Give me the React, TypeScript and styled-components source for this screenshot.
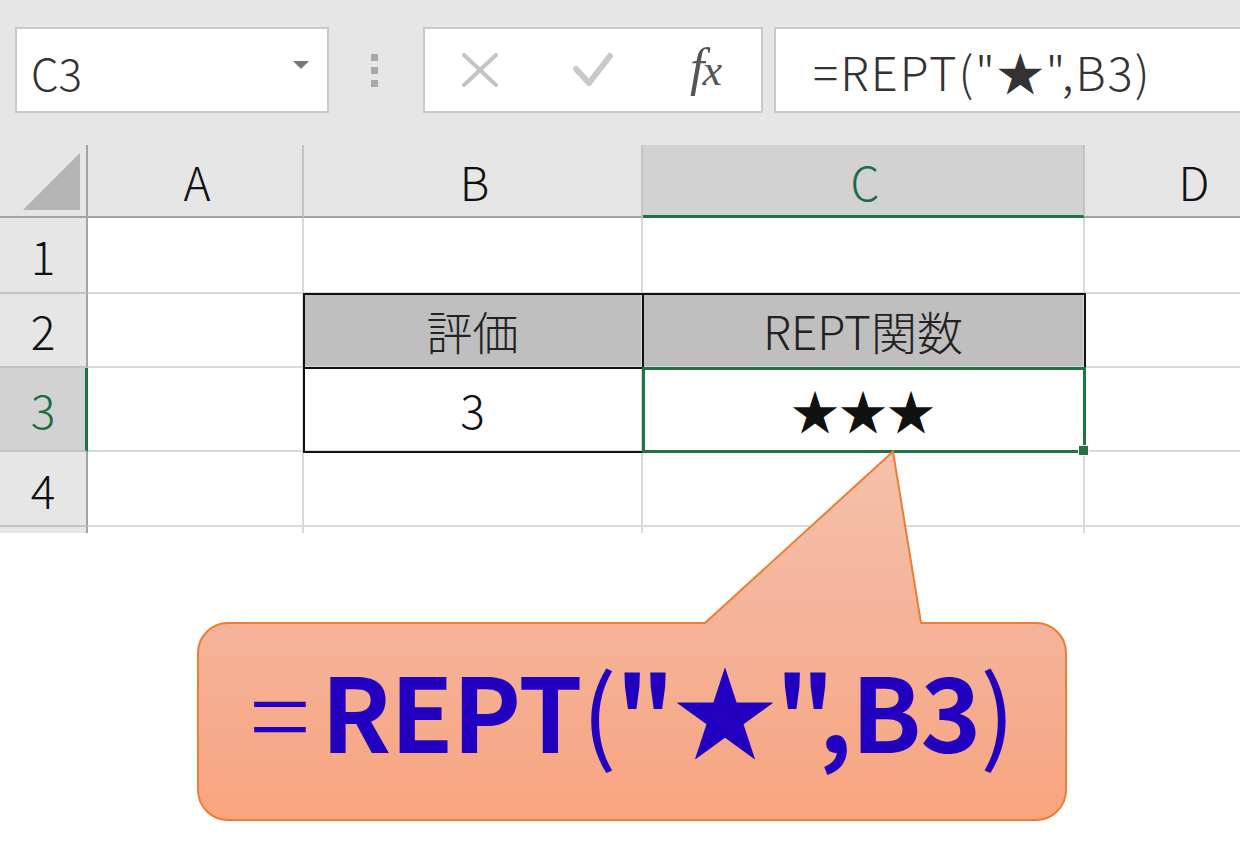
import React from 'react';
import styled, { createGlobalStyle } from 'styled-components';

// Types
type CellKind = 'blank' | 'label' | 'value';

type CellData = {
  text?: string;
  kind: CellKind;
  framed?: boolean;
};

// Datas
const columns = [
  { name: 'A', width: 216 },
  { name: 'B', width: 339 },
  { name: 'C', width: 442 },
  { name: 'D', width: 216 },
];
const rowHeights = [76, 74, 84, 75, 6];
const activeCol = 'C';
const activeRow = 3;

const cells: Record<string, CellData> = {
  B2: { text: '評価', kind: 'label', framed: true },
  C2: { text: 'REPT関数', kind: 'label', framed: true },
  B3: { text: '3', kind: 'value', framed: true },
  C3: { text: '★★★', kind: 'value', framed: true },
};

const GlobalStyle = createGlobalStyle`
  html, body {
    margin: 0;
    padding: 0;
    background: #fff;
  }
  body {
    font-family: 'Noto Sans CJK JP', 'Noto Sans', sans-serif;
  }
`;

const App: React.FC = () => {
  return (
    <Page>
      <GlobalStyle />
      <Toolbar>
        <NameBox>
          <span>C3</span>
          <DropArrow />
        </NameBox>
        <Grip>
          <i />
          <i />
          <i />
        </Grip>
        <ButtonBox>
          <svg width="36" height="34" viewBox="0 0 36 34">
            <path d="M2 2 L34 32 M34 2 L2 32" stroke="#c4c4c4" strokeWidth="4" strokeLinecap="round" />
          </svg>
          <svg width="40" height="36" viewBox="0 0 40 36">
            <path d="M3 17 L16 31 L37 4" stroke="#c9c9c9" strokeWidth="6" fill="none" strokeLinejoin="round" strokeLinecap="round" />
          </svg>
          <Fx>
            f<span>x</span>
          </Fx>
        </ButtonBox>
        <FormulaBox>=REPT("★",B3)</FormulaBox>
      </Toolbar>

      <Sheet $cols={columns.map((c) => c.width)} $rows={rowHeights}>
        <Corner>
          <Triangle />
        </Corner>
        {columns.map((c) => (
          <ColHead key={c.name} $active={c.name === activeCol}>
            {c.name}
          </ColHead>
        ))}
        {rowHeights.map((_, i) => {
          const row = i + 1;
          const partial = row === rowHeights.length;
          return (
            <React.Fragment key={row}>
              <RowHead $active={row === activeRow} $partial={partial}>
                {partial ? '' : row}
              </RowHead>
              {columns.map((c) => {
                const id = `${c.name}${row}`;
                const data = cells[id] || { kind: 'blank' as CellKind };
                const selected = c.name === activeCol && row === activeRow;
                return (
                  <Cell
                    key={id}
                    $kind={data.kind}
                    $framed={!!data.framed}
                    $selected={selected}
                    $partial={partial}
                  >
                    {data.text}
                  </Cell>
                );
              })}
            </React.Fragment>
          );
        })}
      </Sheet>

      <Callout>
        <CalloutShape width="870" height="372" viewBox="0 0 870 372">
          <defs>
            <linearGradient id="calloutFill" gradientUnits="userSpaceOnUse" x1="0" y1="0" x2="0" y2="372">
              <stop offset="0" stopColor="#f5c0aa" />
              <stop offset="0.47" stopColor="#f4b399" />
              <stop offset="1" stopColor="#f8a47f" />
            </linearGradient>
          </defs>
          <path
            d="M31 173 L508 173 L696 1.5 L724 173 L839 173 A30 30 0 0 1 869 203 L869 340 A30 30 0 0 1 839 370 L31 370 A30 30 0 0 1 1 340 L1 203 A30 30 0 0 1 31 173 Z"
            fill="url(#calloutFill)"
            stroke="#ed7d31"
            strokeWidth="2"
            strokeLinejoin="miter"
          />
        </CalloutShape>
        <CalloutText>
          <Equals>=</Equals>REPT<Thin>(</Thin>"★",B3<Thin>)</Thin>
        </CalloutText>
      </Callout>
    </Page>
  );
};

const Page = styled.div`
  position: relative;
  width: 1240px;
  height: 842px;
  overflow: hidden;
  background: #fff;
`;

const Toolbar = styled.div`
  display: flex;
  align-items: flex-start;
  height: 145px;
  box-sizing: border-box;
  padding: 27px 0 0 15px;
  background: #e6e6e6;
`;

const NameBox = styled.div`
  flex: 0 0 314px;
  height: 86px;
  box-sizing: border-box;
  border: 2px solid #c9c9c9;
  background: #fff;
  display: flex;
  align-items: center;
  justify-content: space-between;
  padding: 0 18px 0 14px;
  font-size: 44px;
  font-weight: 300;
  color: #333;
  span {
    line-height: 1;
    margin-top: 4px;
  }
`;

const DropArrow = styled.div`
  width: 0;
  height: 0;
  border-left: 8px solid transparent;
  border-right: 8px solid transparent;
  border-top: 8px solid #777;
  margin-bottom: 10px;
`;

const Grip = styled.div`
  flex: 0 0 94px;
  height: 86px;
  display: flex;
  flex-direction: column;
  align-items: center;
  justify-content: center;
  gap: 6px;
  padding-right: 4px;
  box-sizing: border-box;
  i {
    width: 7px;
    height: 7px;
    background: #a9a9a9;
  }
`;

const ButtonBox = styled.div`
  flex: 0 0 339px;
  height: 86px;
  box-sizing: border-box;
  border: 2px solid #c9c9c9;
  background: #fff;
  display: grid;
  grid-template-columns: 110px 116px 110px;
  align-items: center;
  justify-items: center;
`;

const Fx = styled.div`
  font-family: 'Liberation Serif', 'DejaVu Serif', serif;
  font-style: italic;
  font-size: 52px;
  color: #555;
  line-height: 1;
  margin-bottom: 4px;
  span {
    font-size: 44px;
    margin-left: -2px;
  }
`;

const FormulaBox = styled.div`
  flex: 0 0 520px;
  margin-left: 11px;
  height: 86px;
  box-sizing: border-box;
  border: 2px solid #c9c9c9;
  background: #fff;
  display: flex;
  align-items: center;
  padding-left: 37px;
  font-size: 47px;
  font-weight: 300;
  letter-spacing: 2px;
  color: #333;
  white-space: nowrap;
`;

const Sheet = styled.div<{ $cols: number[]; $rows: number[] }>`
  display: grid;
  grid-template-columns: 88px ${(p) => p.$cols.map((w) => `${w}px`).join(' ')};
  grid-template-rows: 73px ${(p) => p.$rows.map((h) => `${h}px`).join(' ')};
  font-size: 46px;
  font-weight: 300;
  color: #111;
`;

const Corner = styled.div`
  background: #e6e6e6;
  border-right: 2px solid #a3a3a3;
  border-bottom: 2px solid #a3a3a3;
  display: flex;
  align-items: flex-end;
  justify-content: flex-end;
  padding: 0 6px 6px 0;
`;

const Triangle = styled.div`
  width: 57px;
  height: 57px;
  background: #b4b4b4;
  clip-path: polygon(100% 0, 100% 100%, 0 100%);
`;

const ColHead = styled.div<{ $active: boolean }>`
  display: flex;
  align-items: center;
  justify-content: center;
  background: ${(p) => (p.$active ? '#d2d2d2' : '#e6e6e6')};
  color: ${(p) => (p.$active ? '#1d6b45' : '#111')};
  border-right: 2px solid #c3c3c3;
  border-bottom: ${(p) => (p.$active ? '3px solid #217346' : '2px solid #a3a3a3')};
  padding-top: ${(p) => (p.$active ? '1px' : '0')};
  padding-left: 4px;
`;

const RowHead = styled.div<{ $active: boolean; $partial: boolean }>`
  display: flex;
  align-items: center;
  justify-content: center;
  background: ${(p) => (p.$active ? '#d2d2d2' : '#e6e6e6')};
  color: ${(p) => (p.$active ? '#1d6b45' : '#111')};
  border-right: ${(p) => (p.$active ? '3px solid #217346' : '2px solid #a3a3a3')};
  border-bottom: ${(p) => (p.$partial ? 'none' : '2px solid #c3c3c3')};
  padding-left: ${(p) => (p.$active ? '1px' : '0')};
`;

const Cell = styled.div<{ $kind: CellKind; $framed: boolean; $selected: boolean; $partial: boolean }>`
  position: relative;
  display: flex;
  align-items: center;
  justify-content: center;
  background: ${(p) => (p.$kind === 'label' ? '#bfbfbf' : '#fff')};
  border-right: 2px solid #dadada;
  border-bottom: ${(p) => (p.$partial ? 'none' : '2px solid #dadada')};
  color: ${(p) => (p.$kind === 'label' ? '#222' : '#111')};
  font-size: ${(p) => (p.$selected ? '48px' : '46px')};
  font-weight: ${(p) => (p.$selected ? 400 : 300)};
  white-space: nowrap;
  outline: ${(p) =>
    p.$selected ? '3px solid #217346' : p.$framed ? '2px solid #111' : 'none'};
  outline-offset: ${(p) => (p.$selected ? '-2px' : '-1px')};
  z-index: ${(p) => (p.$selected ? 2 : p.$framed ? 1 : 0)};
  ${(p) =>
    p.$selected &&
    `
    &::after {
      content: '';
      position: absolute;
      right: -6px;
      bottom: -6px;
      width: 9px;
      height: 9px;
      background: #217346;
      border: 1px solid #fff;
    }
  `}
`;

const Callout = styled.div`
  position: absolute;
  left: 197px;
  top: 450px;
  width: 870px;
  height: 372px;
  z-index: 5;
`;

const CalloutShape = styled.svg`
  position: absolute;
  left: 0;
  top: 0;
`;

const CalloutText = styled.div`
  position: relative;
  box-sizing: border-box;
  height: 100%;
  padding: 173px 0 28px;
  display: flex;
  align-items: center;
  justify-content: center;
  font-family: 'Noto Sans CJK JP', 'Noto Sans', sans-serif;
  font-weight: 700;
  font-size: 103px;
  letter-spacing: -1px;
  line-height: 1;
  color: #2200c0;
  white-space: nowrap;
`;

const Thin = styled.span`
  font-weight: 400;
`;

const Equals = styled.span`
  font-weight: 300;
  font-size: 112px;
  margin-right: 12px;
`;

export default App;
